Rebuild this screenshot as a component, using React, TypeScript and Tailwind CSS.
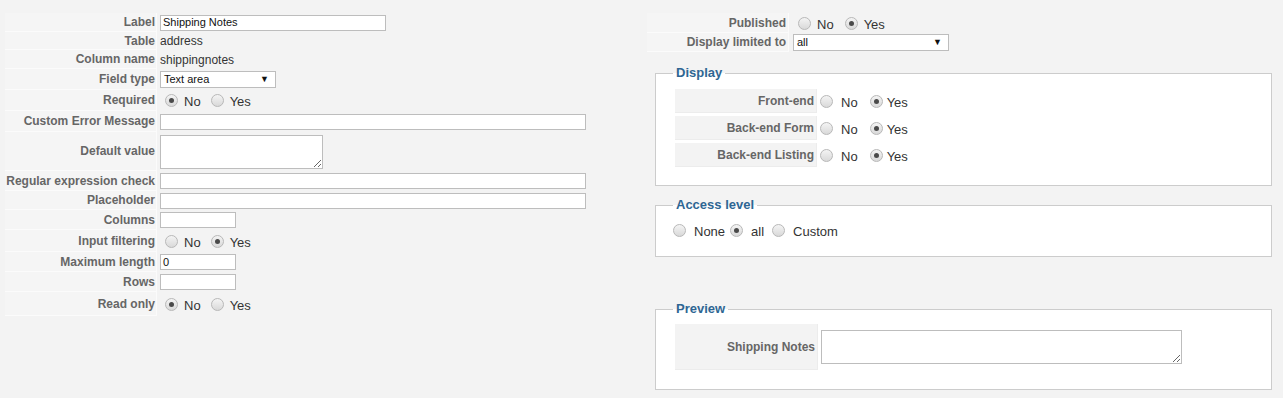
import React from 'react';

const Radio: React.FC<{ checked?: boolean }> = ({ checked }) => (
  <span className="flex h-[13px] w-[13px] shrink-0 items-center justify-center rounded-full border border-[#b8b8b8] bg-linear-to-b from-[#f4f4f4] to-[#d9d9d9]">
    {checked && <span className="h-[5px] w-[5px] rounded-full bg-[#4a4a4a]" />}
  </span>
);

const NoYes: React.FC<{ yes?: boolean }> = ({ yes }) => (
  <div className="flex items-center pl-[5px] text-[13px] text-[#333]">
    <Radio checked={!yes} />
    <span className="ml-[6px] mt-[3px]">No</span>
    <span className="ml-[10px] flex"><Radio checked={yes} /></span>
    <span className="ml-[6px] mt-[3px]">Yes</span>
  </div>
);

const TextInput: React.FC<{ w: string; value?: string }> = ({ w, value }) => (
  <div className={`flex h-[16px] items-center border border-[#bdbdbd] bg-white pl-[2px] text-[11px] text-[#111] ${w}`}>
    {value}
  </div>
);

const Select: React.FC<{ w: string; value: string }> = ({ w, value }) => (
  <div className={`flex h-[17px] items-center justify-between border border-[#bdbdbd] bg-white pl-[3px] pr-[6px] text-[11px] text-[#111] ${w}`}>
    <span>{value}</span>
    <span className="text-[9px]">▼</span>
  </div>
);

const LeftRow: React.FC<{ label: string; h: string; children?: React.ReactNode }> = ({ label, h, children }) => (
  <div className={`flex ${h}`}>
    <div className="flex w-[152px] shrink-0 items-center justify-end border-b border-r border-[#fbfbfb] bg-[#f5f5f5] pr-[1px] text-[12px] font-bold text-[#666]">
      {label}
    </div>
    <div className="flex items-center pl-[3px] text-[12px] text-[#333]">{children}</div>
  </div>
);

const SideRow: React.FC<{ label: string; h: string; children?: React.ReactNode }> = ({ label, h, children }) => (
  <div className={`flex ${h}`}>
    <div className="flex w-[142px] shrink-0 items-center justify-end border-b border-r border-[#fbfbfb] bg-[#f5f5f5] pr-[2px] text-[12px] font-bold text-[#666]">
      {label}
    </div>
    <div className="flex items-center">{children}</div>
  </div>
);

const Legend: React.FC<{ text: string; shift?: string }> = ({ text, shift = '-ml-[2px]' }) => (
  <legend className={`${shift} px-[3px] text-[13px] font-bold leading-[16px] text-[#2e6693]`}>{text}</legend>
);

const DisplayRow: React.FC<{ label: string }> = ({ label }) => (
  <div className="flex h-[24px]">
    <div className="flex w-[142px] items-center justify-end border-b border-r border-[#ececec] bg-[#f3f3f3] pr-[2px] text-[12px] font-bold text-[#666]">
      {label}
    </div>
    <div className="flex items-center pl-[3px] text-[13px] text-[#333]">
      <Radio />
      <span className="ml-[8px] mt-[3px]">No</span>
      <span className="ml-[12px] flex"><Radio checked /></span>
      <span className="ml-[4px] mt-[3px]">Yes</span>
    </div>
  </div>
);

export default function App() {
  return (
    <div className="flex h-[398px] w-[1283px] bg-[#f3f3f3] font-['Liberation_Sans',Arial,sans-serif]">
      {/* left column */}
      <div className="flex w-[647px] shrink-0 flex-col pl-[5px] pt-[13px]">
        <LeftRow label="Label" h="h-[19px]">
          <TextInput w="w-[226px]" value="Shipping Notes" />
        </LeftRow>
        <LeftRow label="Table" h="h-[18px]">address</LeftRow>
        <LeftRow label="Column name" h="h-[19px]">shippingnotes</LeftRow>
        <LeftRow label="Field type" h="h-[21px]">
          <Select w="w-[116px]" value="Text area" />
        </LeftRow>
        <LeftRow label="Required" h="h-[21px]">
          <NoYes />
        </LeftRow>
        <LeftRow label="Custom Error Message" h="h-[21px]">
          <TextInput w="w-[426px]" />
        </LeftRow>
        <LeftRow label="Default value" h="h-[39px]">
          <textarea className="h-[34px] w-[163px] resize border border-[#bdbdbd] bg-white" readOnly />
        </LeftRow>
        <LeftRow label="Regular expression check" h="h-[20px]">
          <TextInput w="w-[426px]" />
        </LeftRow>
        <LeftRow label="Placeholder" h="h-[19px]">
          <TextInput w="w-[426px]" />
        </LeftRow>
        <LeftRow label="Columns" h="h-[20px]">
          <TextInput w="w-[76px]" />
        </LeftRow>
        <LeftRow label="Input filtering" h="h-[22px]">
          <NoYes yes />
        </LeftRow>
        <LeftRow label="Maximum length" h="h-[20px]">
          <TextInput w="w-[76px]" value="0" />
        </LeftRow>
        <LeftRow label="Rows" h="h-[20px]">
          <TextInput w="w-[76px]" />
        </LeftRow>
        <LeftRow label="Read only" h="h-[24px]">
          <NoYes />
        </LeftRow>
      </div>

      {/* right column */}
      <div className="flex w-[636px] flex-col pt-[13px]">
        <SideRow label="Published" h="h-[20px]">
          <div className="flex items-center pl-[9px] text-[13px] text-[#333]">
            <Radio />
            <span className="ml-[6px] mt-[3px]">No</span>
            <span className="ml-[11px] flex"><Radio checked /></span>
            <span className="ml-[6px] mt-[3px]">Yes</span>
          </div>
        </SideRow>
        <SideRow label="Display limited to" h="h-[19px]">
          <div className="pl-[4px]">
            <Select w="w-[156px]" value="all" />
          </div>
        </SideRow>

        <fieldset className="ml-[8px] mt-[13px] w-[617px] border border-[#cccccc] bg-white pb-[18px] pl-[19px] pt-[8px]">
          <Legend text="Display" />
          <div className="flex flex-col gap-[3px]">
            <DisplayRow label="Front-end" />
            <DisplayRow label="Back-end Form" />
            <DisplayRow label="Back-end Listing" />
          </div>
        </fieldset>

        <fieldset className="ml-[8px] mt-[11px] w-[617px] border border-[#cccccc] bg-white pb-[16px] pl-[17px] pt-[7px]">
          <Legend text="Access level" shift="ml-0" />
          <div className="flex h-[20px] items-center text-[13px] text-[#333]">
            <Radio />
            <span className="ml-[8px] mt-[3px]">None</span>
            <span className="ml-[5px] flex"><Radio checked /></span>
            <span className="ml-[8px] mt-[3px]">all</span>
            <span className="ml-[8px] flex"><Radio /></span>
            <span className="ml-[8px] mt-[3px]">Custom</span>
          </div>
        </fieldset>

        <fieldset className="ml-[8px] mt-[44px] w-[617px] border border-[#cccccc] bg-white pb-[19px] pl-[19px] pt-[7px]">
          <Legend text="Preview" />
          <div className="flex h-[46px]">
            <div className="flex w-[143px] items-center justify-end border-b border-r border-[#ececec] bg-[#f3f3f3] pr-[2px] text-[12px] font-bold text-[#666]">
              Shipping Notes
            </div>
            <div className="flex items-center pl-[3px]">
              <textarea className="h-[34px] w-[361px] resize border border-[#bdbdbd] bg-white" readOnly />
            </div>
          </div>
        </fieldset>
      </div>
    </div>
  );
}
